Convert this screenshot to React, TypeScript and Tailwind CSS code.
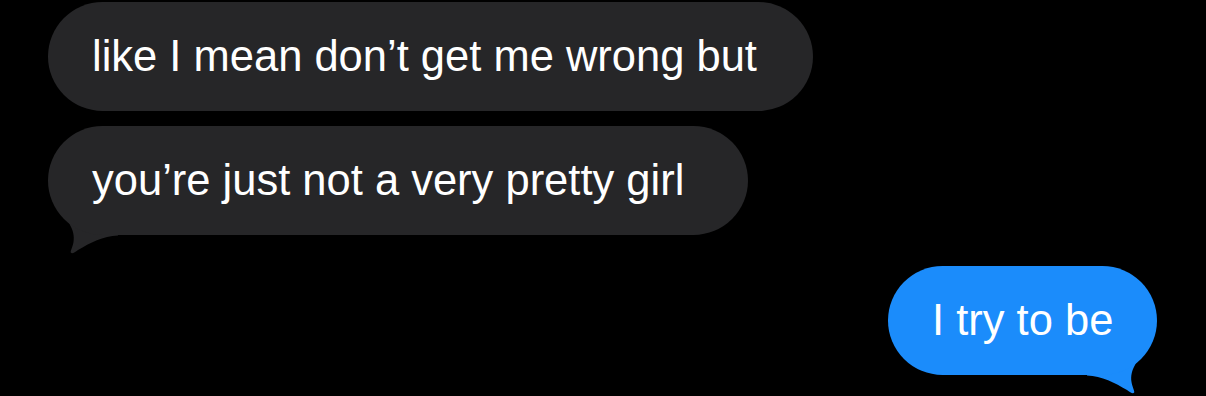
import React from "react";

function Tail({ color, flip }: { color: string; flip?: boolean }) {
  return (
    <svg
      width="70"
      height="56"
      viewBox="0 0 70 56"
      className={
        flip
          ? "absolute right-0 top-[74px] -scale-x-100"
          : "absolute left-0 top-[74px]"
      }
    >
      <path
        d="M10 0 L70 0 L70 35.5 C55 36 42 43 30 50 C27 52 24.5 54 23 52.8 C21.8 51.5 24.5 48 25.5 42 C26.5 36 25 30 22 25 L10 0 Z"
        fill={color}
      />
    </svg>
  );
}

function Bubble({
  text,
  width,
  blue,
  tail,
}: {
  text: string;
  width: string;
  blue?: boolean;
  tail?: boolean;
}) {
  return (
    <div className={`relative ${width}`}>
      {tail && <Tail color={blue ? "#1b8cfb" : "#262628"} flip={blue} />}
      <div
        className={
          blue
            ? "relative flex h-[109px] items-center rounded-full bg-[#1b8cfb] px-[44px]"
            : "relative flex h-[109px] items-center rounded-full bg-[#262628] px-[44px]"
        }
      >
        <span className="whitespace-nowrap text-[43.5px] leading-none text-white">
          {text}
        </span>
      </div>
    </div>
  );
}

export default function App() {
  return (
    <div
      className="flex h-[396px] w-[1206px] flex-col overflow-hidden bg-black pt-[2px]"
      style={{ fontFamily: '"Liberation Sans", Arial, sans-serif' }}
    >
      <div className="ml-[48px]">
        <Bubble text="like I mean don’t get me wrong but" width="w-[765px]" />
      </div>
      <div className="ml-[48px] mt-[15px]">
        <Bubble
          text="you’re just not a very pretty girl"
          width="w-[700px]"
          tail
        />
      </div>
      <div className="mr-[49px] mt-[31px] self-end">
        <Bubble text="I try to be" width="w-[269px]" blue tail />
      </div>
    </div>
  );
}
